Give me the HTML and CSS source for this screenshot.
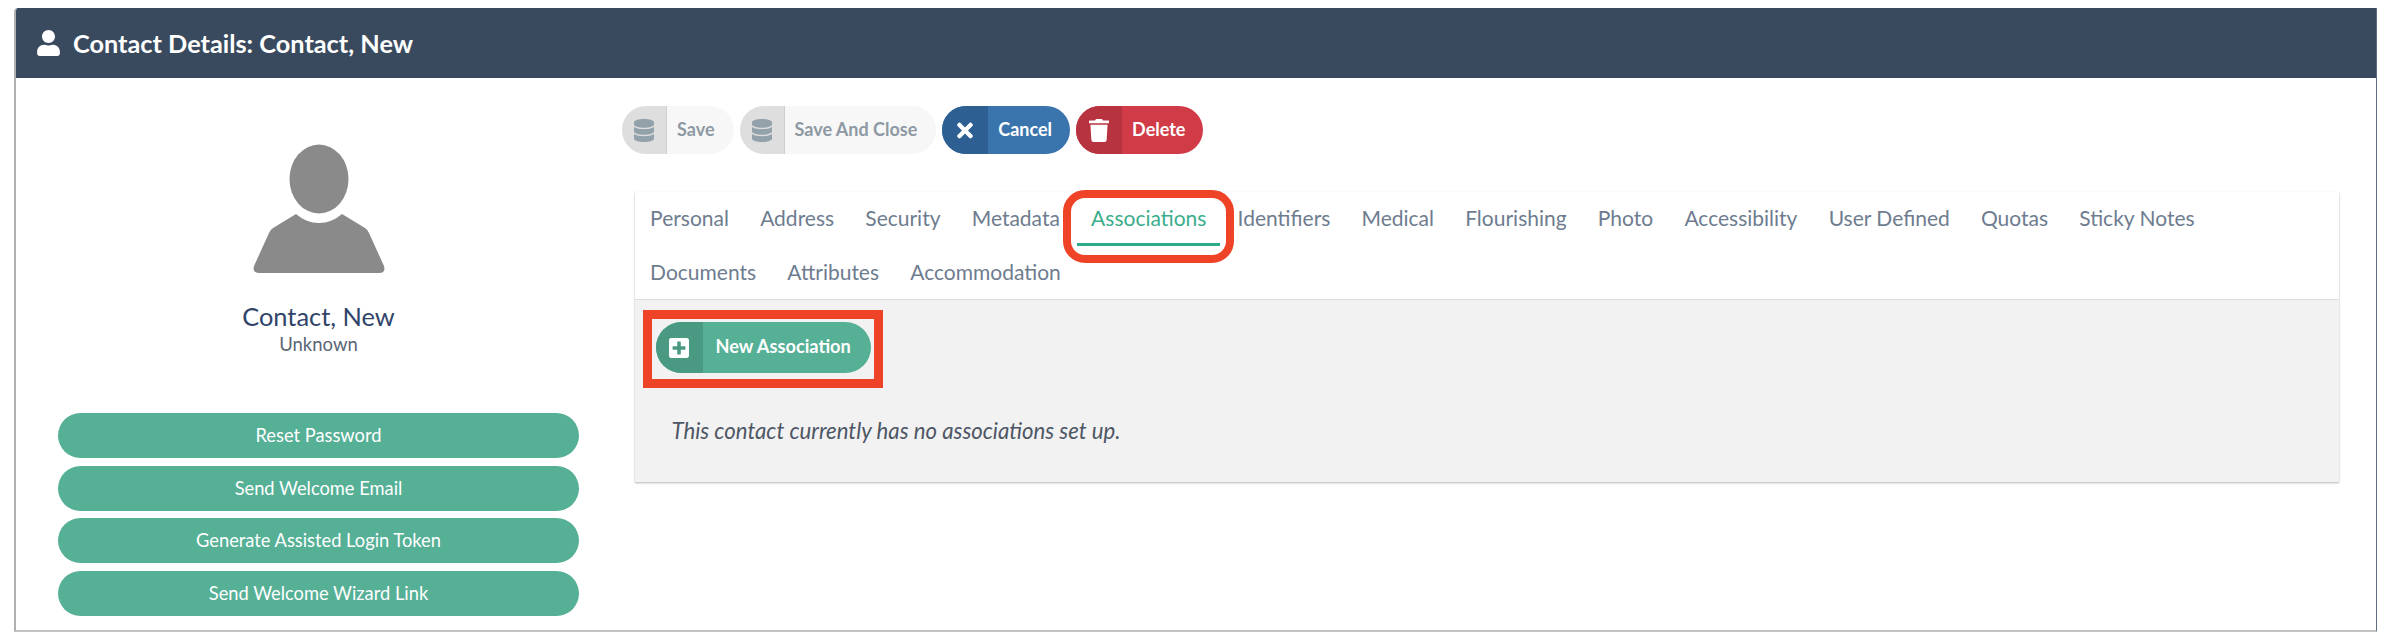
FILE: index.html
```html
<!DOCTYPE html>
<html lang="en">
<head>
  <meta charset="UTF-8">
  <title>Contact Details</title>
  <link rel="stylesheet" href="styles.css">
</head>
<body>

  <div class="frame">
    <div class="titlebar">
      <svg class="titlebar-icon" viewBox="0 0 448 512"><path d="M224 256c70.7 0 128-57.3 128-128S294.7 0 224 0 96 57.3 96 128s57.3 128 128 128zm89.6 32h-16.7c-22.2 10.2-46.9 16-72.9 16s-50.6-5.8-72.9-16h-16.7C60.2 288 0 348.2 0 422.4V464c0 26.5 21.5 48 48 48h352c26.5 0 48-21.5 48-48v-41.6c0-74.2-60.2-134.4-134.4-134.4z"/></svg>
      <span>Contact Details: Contact, New</span>
    </div>

    <div class="content">
      <div class="sidebar">
        <svg class="avatar" viewBox="0 0 132 130">
          <ellipse cx="66" cy="35" rx="29.5" ry="34.5"/>
          <path d="M43 70 C50 76 58 79 66 79 C74 79 82 76 89 70 L112 84 Q115 86 116 89 L131 122 Q133 129 126 129 L6 129 Q-1 129 1 122 L16 89 Q17 86 20 84 Z"/>
        </svg>
        <div class="contact-nome">Contact, New</div>
        <div class="contact-ruolo">Unknown</div>
        <div class="side-buttons">
          <div class="side-btn">Reset Password</div>
          <div class="side-btn">Send Welcome Email</div>
          <div class="side-btn">Generate Assisted Login Token</div>
          <div class="side-btn">Send Welcome Wizard Link</div>
        </div>
      </div>

      <div class="main">
        <div class="toolbar">
          <div class="btn btn-disabled">
            <span class="btn-icon"><svg viewBox="0 0 448 512"><use href="#db"/></svg></span>
            <span class="btn-text">Save</span>
          </div>
          <div class="btn btn-disabled">
            <span class="btn-icon"><svg viewBox="0 0 448 512"><path id="db" d="M448 73.143v45.714C448 159.143 347.667 192 224 192S0 159.143 0 118.857V73.143C0 32.857 100.333 0 224 0s224 32.857 224 73.143zM448 176v102.857C448 319.143 347.667 352 224 352S0 319.143 0 278.857V176c48.125 33.143 136.208 48.572 224 48.572S399.874 209.143 448 176zm0 160v102.857C448 479.143 347.667 512 224 512S0 479.143 0 438.857V336c48.125 33.143 136.208 48.572 224 48.572S399.874 369.143 448 336z"/></svg></span>
            <span class="btn-text">Save And Close</span>
          </div>
          <div class="btn btn-cancel">
            <span class="btn-icon"><svg viewBox="0 0 352 512"><path d="M242.72 256l100.07-100.07c12.28-12.28 12.28-32.19 0-44.48l-22.24-22.24c-12.28-12.28-32.19-12.28-44.48 0L176 189.28 75.93 89.21c-12.28-12.28-32.19-12.28-44.48 0L9.21 111.45c-12.28 12.28-12.28 32.19 0 44.48L109.28 256 9.21 356.07c-12.28 12.28-12.28 32.19 0 44.48l22.24 22.24c12.28 12.28 32.2 12.28 44.48 0L176 322.72l100.07 100.07c12.28 12.28 32.2 12.28 44.48 0l22.24-22.24c12.28-12.28 12.28-32.19 0-44.48L242.72 256z"/></svg></span>
            <span class="btn-text">Cancel</span>
          </div>
          <div class="btn btn-delete">
            <span class="btn-icon"><svg viewBox="0 0 448 512"><path d="M432 32H312l-9.4-18.7A24 24 0 0 0 281.1 0H166.8a23.72 23.72 0 0 0-21.4 13.3L136 32H16A16 16 0 0 0 0 48v32a16 16 0 0 0 16 16h416a16 16 0 0 0 16-16V48a16 16 0 0 0-16-16zM53.2 467a48 48 0 0 0 47.9 45h245.8a48 48 0 0 0 47.9-45L416 128H32z"/></svg></span>
            <span class="btn-text">Delete</span>
          </div>
        </div>

        <div class="panel">
          <div class="tabs">
            <div class="tab">Personal</div>
            <div class="tab">Address</div>
            <div class="tab">Security</div>
            <div class="tab">Metadata</div>
            <div class="tab tab-active">Associations<span class="tab-highlight"></span></div>
            <div class="tab">Identifiers</div>
            <div class="tab">Medical</div>
            <div class="tab">Flourishing</div>
            <div class="tab">Photo</div>
            <div class="tab">Accessibility</div>
            <div class="tab">User Defined</div>
            <div class="tab">Quotas</div>
            <div class="tab">Sticky Notes</div>
            <div class="tab">Documents</div>
            <div class="tab">Attributes</div>
            <div class="tab">Accommodation</div>
          </div>
          <div class="panel-body">
            <div class="new-highlight">
              <div class="btn btn-new">
                <span class="btn-icon"><svg viewBox="0 32 448 448"><path d="M400 32H48C21.5 32 0 53.5 0 80v352c0 26.5 21.5 48 48 48h352c26.5 0 48-21.5 48-48V80c0-26.5-21.5-48-48-48zm-32 252c0 6.6-5.4 12-12 12h-92v92c0 6.6-5.4 12-12 12h-56c-6.6 0-12-5.4-12-12v-92H92c-6.6 0-12-5.4-12-12v-56c0-6.6 5.4-12 12-12h92v-92c0-6.6 5.4-12 12-12h56c6.6 0 12 5.4 12 12v92h92c6.6 0 12 5.4 12 12v56z"/></svg></span>
                <span class="btn-text">New Association</span>
              </div>
            </div>
            <p class="empty-text">This contact currently has no associations set up.</p>
          </div>
        </div>
      </div>
    </div>
  </div>

</body>
</html>
```

FILE: styles.css
```css
html, body {
  margin: 0;
  height: 632px;
  overflow: hidden;
  background: #fff;
}
body {
  padding: 8px 11px 0 14px;
  box-sizing: border-box;
  font-family: Lato, "Open Sans", sans-serif;
  color: #222;
}
.frame {
  height: 624px;
  box-sizing: border-box;
  border-left: 2px solid #b0b0b0;
  border-right: 1px solid #5f6d80;
  border-bottom: 2px solid #c4c4c4;
  border-top-left-radius: 4px;
  overflow: hidden;
}
.titlebar {
  display: flex;
  align-items: center;
  height: 70px;
  padding-left: 21px;
  gap: 13px;
  background: #3a4a5e;
  color: #fff;
  font-size: 25.3px;
  font-weight: 700;
}
.titlebar-icon {
  width: 23px;
  height: 26px;
  fill: #fff;
}
.content {
  display: flex;
}

/* colonna sinistra */
.sidebar {
  width: 606px;
  box-sizing: border-box;
  padding: 66px 43px 0 42px;
  display: flex;
  flex-direction: column;
  align-items: center;
}
.avatar {
  width: 132px;
  height: 130px;
  fill: #8a8a8a;
}
.contact-nome {
  margin-top: 27px;
  font-size: 25.4px;
  line-height: 30px;
  color: #2f4468;
}
.contact-ruolo {
  margin-top: 1px;
  font-size: 18.5px;
  line-height: 24px;
  color: #5b6675;
}
.side-buttons {
  width: 100%;
  margin-top: 57px;
  display: flex;
  flex-direction: column;
  gap: 7.7px;
}
.side-btn {
  height: 45px;
  line-height: 45px;
  border-radius: 23px;
  text-align: center;
  background: #55b096;
  color: #fff;
  font-size: 18.3px;
}

/* colonna destra */
.main {
  flex: 1;
  padding-top: 28px;
}
.toolbar {
  display: flex;
  gap: 6px;
}
.btn {
  display: flex;
  height: 48px;
  border-radius: 24px;
  overflow: hidden;
  font-size: 18px;
  font-weight: 700;
  color: #fff;
}
.btn-icon {
  display: flex;
  align-items: center;
  justify-content: center;
  width: 46px;
  flex: none;
}
.btn-icon svg {
  width: 20px;
  height: 23px;
  fill: currentColor;
}
.btn-text {
  display: flex;
  align-items: center;
  padding: 0 18px 2px 10px;
}
.btn-disabled {
  background: #f7f7f7;
  color: #8e99a3;
}
.btn-disabled .btn-icon {
  box-sizing: border-box;
  width: 45px;
  background: #dedede;
  border-right: 1px solid #cfcfcf;
  color: #93a1ab;
}
.btn-disabled .btn-text {
  padding-right: 19px;
}
.btn-cancel {
  background: #3a74ad;
}
.btn-cancel .btn-icon {
  background: #2e5f93;
}
.btn-delete {
  background: #d03b47;
}
.btn-delete .btn-icon {
  background: #b7333f;
}

.panel {
  width: 1704px;
  margin: 38px 0 0 12.5px;
  box-shadow: 0 1px 2px rgba(0, 0, 0, .3);
}
.tabs {
  display: flex;
  flex-wrap: wrap;
  align-content: flex-start;
  height: 108px;
  box-sizing: border-box;
  border-bottom: 1px solid #ddd;
  background: #fff;
}
.tab {
  position: relative;
  height: 54px;
  line-height: 51px;
  padding: 0 15.6px;
  font-size: 21px;
  color: #6e7c8f;
}
.tab-active {
  color: #3aae8c;
}
.tab-active::after {
  content: "";
  position: absolute;
  left: 2px;
  right: 2px;
  bottom: 0;
  height: 3px;
  background: #2bab87;
}
.tab-highlight {
  position: absolute;
  left: -12px;
  right: -12px;
  top: -2px;
  bottom: -17px;
  border: 8px solid #ee4327;
  border-radius: 22px;
}
.panel-body {
  height: 182px;
  box-sizing: border-box;
  padding: 10px 0 0 8px;
  background: #f2f2f2;
}
.new-highlight {
  width: fit-content;
  padding: 3px 3px 6px 4px;
  border: 9px solid #ee4327;
}
.btn-new {
  height: 51px;
  border-radius: 26px;
  background: #55b096;
}
.btn-new .btn-icon {
  width: 47px;
  background: #4a9a83;
}
.btn-new .btn-icon svg {
  height: 20px;
}
.btn-new .btn-text {
  padding: 0 20px 3px 13px;
  font-size: 18.2px;
}
.empty-text {
  margin: 30px 0 0 29px;
  font-size: 22.2px;
  line-height: 26px;
  font-style: italic;
  color: #4d5665;
}
```
